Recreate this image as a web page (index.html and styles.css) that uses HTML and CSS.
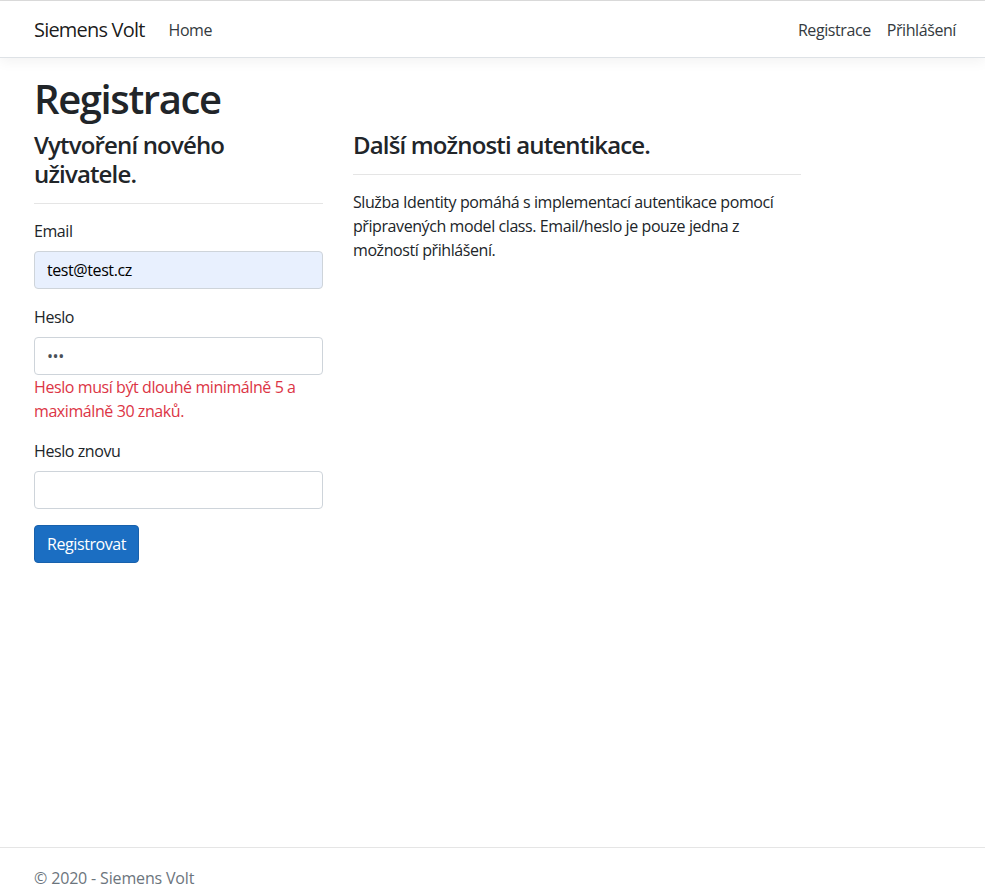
FILE: index.html
```html
<!DOCTYPE html>
<html lang="cs">
<head>
<meta charset="utf-8">
<title>Registrace - Siemens Volt</title>
<link rel="stylesheet" href="styles.css">
</head>
<body>
<div class="page">
  <header class="navbar">
    <div class="nav-inner">
      <a class="brand" href="#">Siemens Volt</a>
      <ul class="nav nav-left">
        <li><a class="nav-link" href="#">Home</a></li>
      </ul>
      <ul class="nav nav-right">
        <li><a class="nav-link" href="#">Registrace</a></li>
        <li><a class="nav-link" href="#">Přihlášení</a></li>
      </ul>
    </div>
  </header>

  <main class="container">
    <h1 class="title">Registrace</h1>
    <div class="row">
      <div class="col-4">
        <form class="form">
          <h4 class="subtitle">Vytvoření nového uživatele.</h4>
          <hr class="rule">
          <div class="form-group">
            <label class="label">Email</label>
            <input class="input input-autofill" type="text" value="test@test.cz">
          </div>
          <div class="form-group">
            <label class="label">Heslo</label>
            <input class="input input-password" type="password" value="123">
            <span class="error">Heslo musí být dlouhé minimálně 5 a maximálně 30 znaků.</span>
          </div>
          <div class="form-group">
            <label class="label">Heslo znovu</label>
            <input class="input" type="password" value="">
          </div>
          <button type="button" class="btn">Registrovat</button>
        </form>
      </div>
      <div class="col-6">
        <section>
          <h4 class="subtitle">Další možnosti autentikace.</h4>
          <hr class="rule">
          <p class="text">Služba Identity pomáhá s implementací autentikace pomocí připravených model class. Email/heslo je pouze jedna z možností přihlášení.</p>
        </section>
      </div>
    </div>
  </main>

  <footer class="footer">
    <div class="footer-inner">&copy; 2020 - Siemens Volt</div>
  </footer>
</div>
</body>
</html>
```
FILE: styles.css
```css
* { box-sizing: border-box; }

html, body {
  margin: 0;
  padding: 0;
  height: 100%;
  overflow: hidden;
}

body {
  font-family: "Open Sans", "Noto Sans", sans-serif;
  font-size: 16px;
  line-height: 1.5;
  letter-spacing: -0.026em;
  color: #212529;
  background: #fff;
}

.page {
  display: flex;
  flex-direction: column;
  height: 892px;
  border-top: 1px solid #dcdcdc;
}

.navbar {
  background: #fff;
  border-bottom: 1px solid #dee2e6;
  box-shadow: 0 4px 12px rgba(0, 0, 0, 0.05);
  padding: 8px 0;
  margin-bottom: 16px;
}

.nav-inner {
  width: 960px;
  margin-left: 19px;
  padding: 1px 15px 0;
  height: 40px;
  display: flex;
  align-items: center;
}

.brand {
  font-size: 20px;
  line-height: 30px;
  padding: 5px 0;
  margin-right: 16px;
  letter-spacing: -0.04em;
  color: rgba(0, 0, 0, 0.9);
  text-decoration: none;
  white-space: nowrap;
}

.nav {
  list-style: none;
  margin: 0;
  padding: 0;
  display: flex;
}

.nav-right { margin-left: auto; }

.nav-link {
  display: block;
  padding: 8px;
  color: #343a40;
  text-decoration: none;
}

.container {
  flex: 1;
  width: 957px;
  margin-left: 19px;
  padding: 0 15px;
}

.title {
  font-size: 40px;
  font-weight: 600;
  line-height: 1.2;
  letter-spacing: -0.035em;
  margin: 0 0 8px;
  padding-top: 1px;
}

.row {
  display: flex;
  margin: 0 -15px;
}

.col-4 { width: 33.3333%; padding: 0 15px; }
.col-6 { width: 50%; padding: 0 15px; }

.subtitle {
  font-size: 24px;
  font-weight: 600;
  line-height: 1.2;
  letter-spacing: -0.035em;
  margin: 0 0 8px;
}

.rule {
  border: 0;
  border-top: 1px solid rgba(0, 0, 0, 0.1);
  margin: 14px 0 15px;
}

.form-group { margin-bottom: 16px; }

.label {
  display: inline-block;
  margin-bottom: 8px;
}

.input {
  display: block;
  width: 100%;
  height: 38px;
  padding: 6px 12px;
  font-family: inherit;
  font-size: 16px;
  line-height: 1.5;
  letter-spacing: inherit;
  color: #495057;
  background: #fff;
  border: 1px solid #ced4da;
  border-radius: 4px;
}

.input-autofill {
  background: #e8f0fe;
  color: #000;
}

.input-password { color: #495057; }

.error {
  color: #dc3545;
}

.btn {
  font-family: inherit;
  font-size: 16px;
  line-height: 1.5;
  letter-spacing: inherit;
  padding: 6px 12px;
  color: #fff;
  background: #1b6ec2;
  border: 1px solid #1861ac;
  border-radius: 4px;
}

.text { margin: 0 0 16px; }

.footer {
  border-top: 1px solid #e5e5e5;
  color: #6c757d;
  height: 45px;
}

.footer-inner {
  margin-left: 19px;
  padding: 18px 15px 0;
  line-height: 24px;
  letter-spacing: -0.01em;
  white-space: nowrap;
}
```
